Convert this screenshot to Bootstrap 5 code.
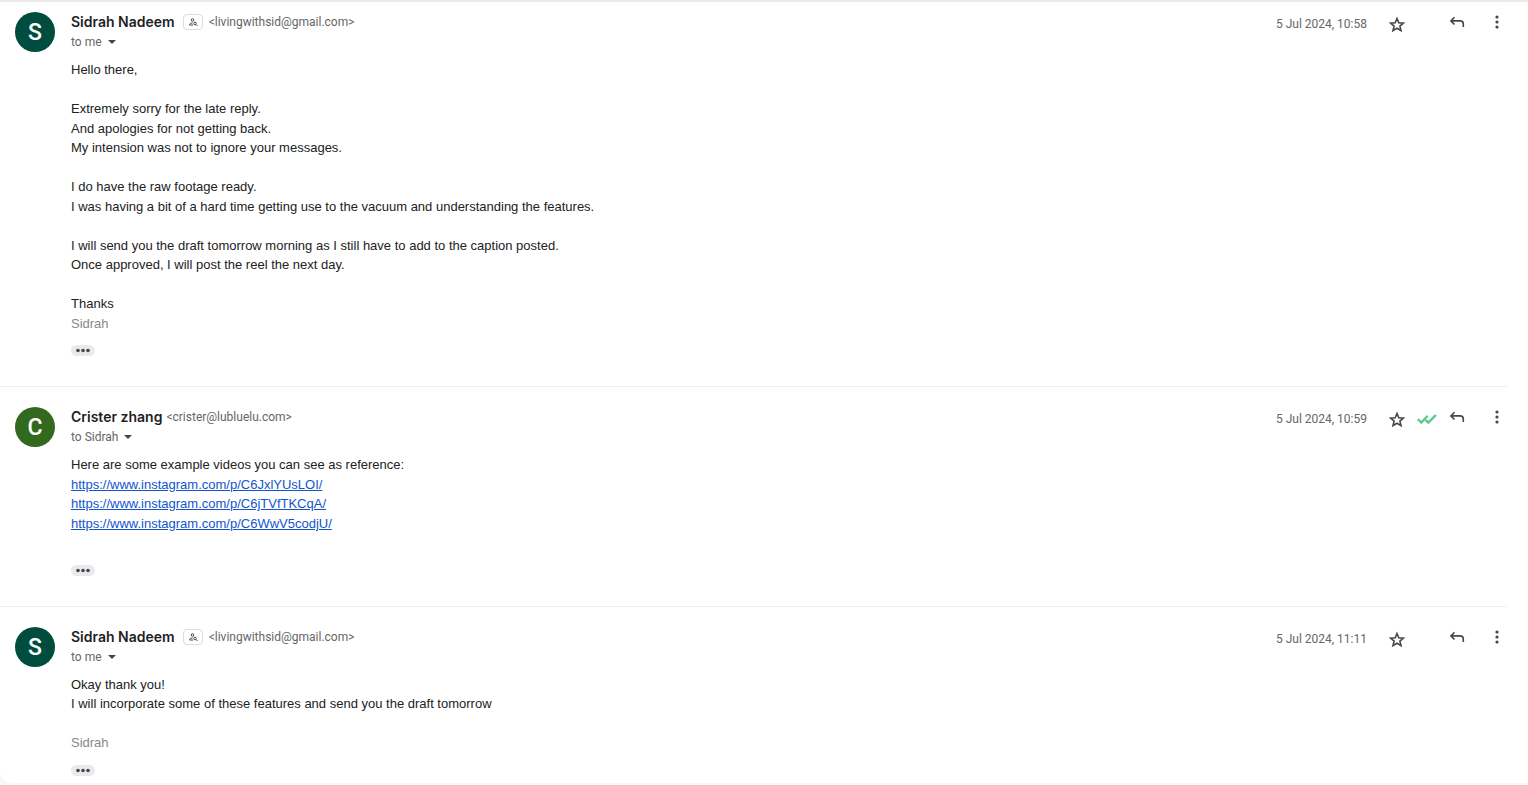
<!DOCTYPE html>
<html lang="en">
<head>
<meta charset="utf-8">
<meta name="viewport" content="width=device-width, initial-scale=1">
<title>Conversation</title>
<link href="https://cdn.jsdelivr.net/npm/bootstrap@5.3.0/dist/css/bootstrap.min.css" rel="stylesheet">
<style>
  body { background: #f6f8fc; font-family: "Liberation Sans", Arial, sans-serif; font-size: 13px; color: #222; }
  .thread { background: #fff; border-top: 2px solid #ebebeb; border-radius: 0 0 0 12px; padding-right: 21px; margin-bottom: 2px; }
  .message { padding: 20px 0 30px 15px; gap: 16px; border-bottom: 1px solid #eceff1; }
  .message:first-child { padding-top: 10px; }
  .message:last-child { padding-bottom: 7px; border-bottom: 0; }
  .avatar { width: 40px; height: 40px; font: 500 23px/41px Roboto, sans-serif; color: #fff; }
  .avatar-s { background: #004d40; }
  .avatar-c { background: #33691e; }
  .meta { font-family: Roboto, sans-serif; font-size: 12px; line-height: 20px; color: #666; }
  .sender { font-family: Inter, sans-serif; font-size: 14px; line-height: 20px; font-weight: 600; color: #1f1f1f; }
  .plain { background: none; border: 0; padding: 0; color: inherit; }
  .contact { width: 20px; height: 16px; border: 1px solid #dadce0; border-radius: 4px; margin: 0 6px 0 8px; color: #444746; }
  .address { margin-left: 4px; }
  .contact + .address { margin-left: 0; }
  .recipient { gap: 6px; }
  .tools { color: #444746; height: 20px; }
  .tools .plain { width: 20px; height: 20px; }
  .tools svg, .contact svg, .trimmed svg { display: block; margin: auto; }
  .tools .star { margin: 2px 0 0 20px; }
  .seen { width: 20px; margin: 6px 10px 0; }
  .more { margin-left: 20px; }
  .date { padding-top: 2px; }
  .content { margin-top: 8px; line-height: 1.5; }
  .content a { color: #1155cc; }
  .signature { color: #888; }
  .trimmed { width: 24px; height: 11px; border-radius: 6px; background: #e8eaed; margin-top: 12px; color: #444746; }
</style>
</head>
<body>
<svg class="d-none">
  <symbol id="star" viewBox="0 0 20 20"><path d="M10 4.500l1.800 4.200 4.600.4-3.500 3 1.100 4.500L10 14.200l-4 2.400 1.100-4.500-3.500-3 4.600-.4z" fill="none" stroke="currentColor" stroke-width="1.600"/></symbol>
  <symbol id="reply" viewBox="0 0 20 20"><path d="M7.500 5.300L3.900 8.900l3.600 3.600M4 8.900h9q3.300 0 3.300 3.200v3" fill="none" stroke="currentColor" stroke-width="1.600"/></symbol>
  <symbol id="dots" viewBox="0 0 20 20"><g fill="currentColor"><circle cx="10" cy="5" r="1.600"/><circle cx="10" cy="10" r="1.600"/><circle cx="10" cy="15" r="1.600"/></g></symbol>
  <symbol id="ellipsis" viewBox="0 0 24 11"><g fill="currentColor"><circle cx="7" cy="5.500" r="1.800"/><circle cx="12" cy="5.500" r="1.800"/><circle cx="17" cy="5.500" r="1.800"/></g></symbol>
  <symbol id="person" viewBox="0 0 10 10"><g fill="none" stroke="currentColor"><circle cx="4.500" cy="3" r="1.300"/><path d="M5 8H1.500V7.500Q2 6 4.500 5.800"/><circle cx="7" cy="6.500" r="1.300"/><path d="M8 7.500L9.500 9"/></g></symbol>
  <symbol id="caret" viewBox="0 0 8 4"><path d="M0 0h8L4 4z" fill="#444746"/></symbol>
  <symbol id="checks" viewBox="0 0 20 12"><path d="M1.500 6.800l2.800 2.800L10 3.500M9.300 7.600l2 2L18.300 2.600" fill="none" stroke="#5bc98a" stroke-width="2.300" stroke-linecap="round"/></symbol>
</svg>
<main class="thread">
  <article class="message d-flex">
    <div class="avatar avatar-s rounded-circle text-center flex-shrink-0">S</div>
    <div class="flex-grow-1">
      <header class="meta d-flex justify-content-between">
        <div>
          <div class="d-flex align-items-center"><h2 class="sender mb-0">Sidrah Nadeem</h2><button class="plain contact" aria-label="Contact details"><svg width="10" height="10"><use href="#person"/></svg></button><span class="address">&lt;livingwithsid@gmail.com&gt;</span></div>
          <button class="plain recipient d-flex align-items-center">to me <svg width="8" height="4"><use href="#caret"/></svg></button>
        </div>
        <div class="tools d-flex"><time class="date meta">5 Jul 2024, 10:58</time><button class="plain star" aria-label="Star"><svg width="20" height="20"><use href="#star"/></svg></button><span class="seen"></span><button class="plain" aria-label="Reply"><svg width="20" height="20"><use href="#reply"/></svg></button><button class="plain more" aria-label="More"><svg width="20" height="20"><use href="#dots"/></svg></button></div>
      </header>
      <div class="content">Hello there,<br><br>Extremely sorry for the late reply.<br>And apologies for not getting back.<br>My intension was not to ignore your messages.<br><br>I do have the raw footage ready.<br>I was having a bit of a hard time getting use to the vacuum and understanding the features.<br><br>I will send you the draft tomorrow morning as I still have to add to the caption posted.<br>Once approved, I will post the reel the next day.<br><br>Thanks<br><span class="signature">Sidrah</span></div>
      <button class="plain trimmed d-block" aria-label="Show trimmed content"><svg width="24" height="11"><use href="#ellipsis"/></svg></button>
    </div>
  </article>
  <article class="message d-flex">
    <div class="avatar avatar-c rounded-circle text-center flex-shrink-0">C</div>
    <div class="flex-grow-1">
      <header class="meta d-flex justify-content-between">
        <div>
          <div class="d-flex align-items-center"><h2 class="sender mb-0">Crister zhang</h2><span class="address">&lt;crister@lubluelu.com&gt;</span></div>
          <button class="plain recipient d-flex align-items-center">to Sidrah <svg width="8" height="4"><use href="#caret"/></svg></button>
        </div>
        <div class="tools d-flex"><time class="date meta">5 Jul 2024, 10:59</time><button class="plain star" aria-label="Star"><svg width="20" height="20"><use href="#star"/></svg></button><span class="seen"><svg width="20" height="12"><use href="#checks"/></svg></span><button class="plain" aria-label="Reply"><svg width="20" height="20"><use href="#reply"/></svg></button><button class="plain more" aria-label="More"><svg width="20" height="20"><use href="#dots"/></svg></button></div>
      </header>
      <div class="content">Here are some example videos you can see as reference:<br><a href="https://www.instagram.com/p/C6JxlYUsLOI/">https://www.instagram.com/p/C6JxlYUsLOI/</a><br><a href="https://www.instagram.com/p/C6jTVfTKCqA/">https://www.instagram.com/p/C6jTVfTKCqA/</a><br><a href="https://www.instagram.com/p/C6WwV5codjU/">https://www.instagram.com/p/C6WwV5codjU/</a><br><br></div>
      <button class="plain trimmed d-block" aria-label="Show trimmed content"><svg width="24" height="11"><use href="#ellipsis"/></svg></button>
    </div>
  </article>
  <article class="message d-flex">
    <div class="avatar avatar-s rounded-circle text-center flex-shrink-0">S</div>
    <div class="flex-grow-1">
      <header class="meta d-flex justify-content-between">
        <div>
          <div class="d-flex align-items-center"><h2 class="sender mb-0">Sidrah Nadeem</h2><button class="plain contact" aria-label="Contact details"><svg width="10" height="10"><use href="#person"/></svg></button><span class="address">&lt;livingwithsid@gmail.com&gt;</span></div>
          <button class="plain recipient d-flex align-items-center">to me <svg width="8" height="4"><use href="#caret"/></svg></button>
        </div>
        <div class="tools d-flex"><time class="date meta">5 Jul 2024, 11:11</time><button class="plain star" aria-label="Star"><svg width="20" height="20"><use href="#star"/></svg></button><span class="seen"></span><button class="plain" aria-label="Reply"><svg width="20" height="20"><use href="#reply"/></svg></button><button class="plain more" aria-label="More"><svg width="20" height="20"><use href="#dots"/></svg></button></div>
      </header>
      <div class="content">Okay thank you!<br>I will incorporate some of these features and send you the draft tomorrow<br><br><span class="signature">Sidrah</span></div>
      <button class="plain trimmed d-block" aria-label="Show trimmed content"><svg width="24" height="11"><use href="#ellipsis"/></svg></button>
    </div>
  </article>
</main>
<script src="https://cdn.jsdelivr.net/npm/bootstrap@5.3.0/dist/js/bootstrap.bundle.min.js"></script>
</body>
</html>
